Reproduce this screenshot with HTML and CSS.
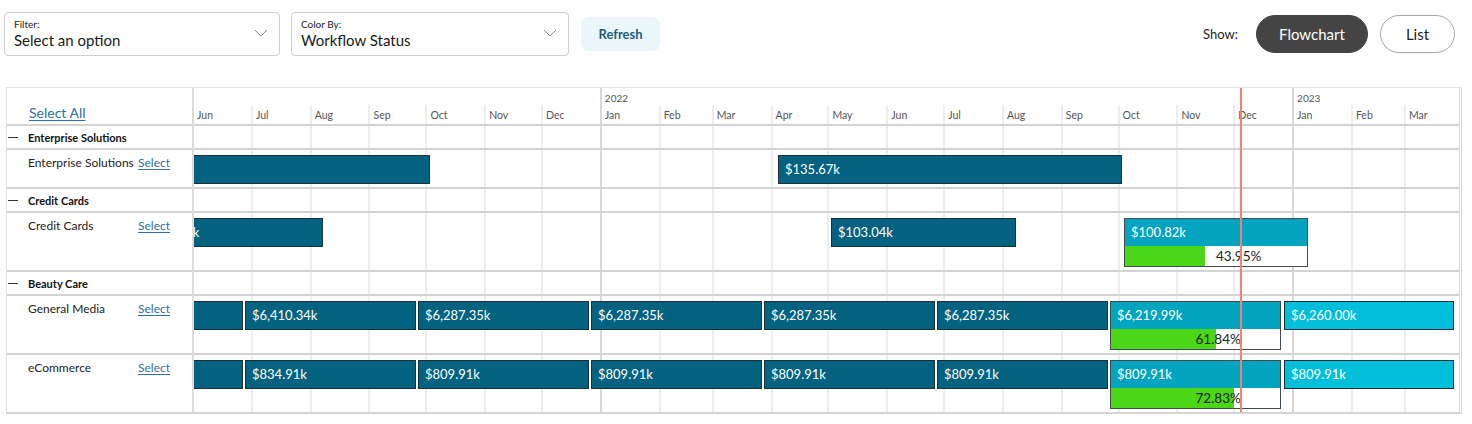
FILE: index.html
```html
<!DOCTYPE html>
<html lang="en">
<head>
<meta charset="utf-8">
<title>Workflow Gantt</title>
<link rel="stylesheet" href="styles.css">
</head>
<body>
<div class="toolbar">
  <div class="select select-filter">
    <div class="select-text">
      <span class="select-label">Filter:</span>
      <span class="select-value">Select an option</span>
    </div>
    <svg class="chev" width="14" height="8" viewBox="0 0 14 8"><path d="M1 1 L7 7 L13 1" fill="none" stroke="#888" stroke-width="1"/></svg>
  </div>
  <div class="select select-color">
    <div class="select-text">
      <span class="select-label">Color By:</span>
      <span class="select-value">Workflow Status</span>
    </div>
    <svg class="chev" width="14" height="8" viewBox="0 0 14 8"><path d="M1 1 L7 7 L13 1" fill="none" stroke="#888" stroke-width="1"/></svg>
  </div>
  <button class="refresh">Refresh</button>
  <div class="spacer"></div>
  <span class="show-label">Show:</span>
  <button class="pill pill-active">Flowchart</button>
  <button class="pill">List</button>
</div>

<div class="gantt">
  <div class="left-col">
    <div class="cell head-cell"><a class="select-all">Select All</a></div>
    <div class="cell group-cell"><span class="dash"></span><b>Enterprise Solutions</b></div>
    <div class="cell item-cell h39"><span class="item-name">Enterprise Solutions</span><a class="sel-link">Select</a></div>
    <div class="cell group-cell"><span class="dash"></span><b>Credit Cards</b></div>
    <div class="cell item-cell h59"><span class="item-name">Credit Cards</span><a class="sel-link">Select</a></div>
    <div class="cell group-cell"><span class="dash"></span><b>Beauty Care</b></div>
    <div class="cell item-cell h59"><span class="item-name">General Media</span><a class="sel-link">Select</a></div>
    <div class="cell item-cell h58 last"><span class="item-name">eCommerce</span><a class="sel-link">Select</a></div>
  </div>

  <div class="timeline">
    <div class="tl-head">
      <div class="years">
        <div class="year"></div>
        <div class="year year-mark">2022</div>
        <div class="year year-mark">2023</div>
      </div>
      <div class="months">
        <div class="month">Jun</div><div class="month">Jul</div><div class="month">Aug</div><div class="month">Sep</div><div class="month">Oct</div><div class="month">Nov</div><div class="month">Dec</div>
        <div class="month ystart">Jan</div><div class="month">Feb</div><div class="month">Mar</div><div class="month">Apr</div><div class="month">May</div><div class="month">Jun</div><div class="month">Jul</div><div class="month">Aug</div><div class="month">Sep</div><div class="month">Oct</div><div class="month">Nov</div><div class="month">Dec</div>
        <div class="month ystart">Jan</div><div class="month">Feb</div><div class="month">Mar</div>
      </div>
    </div>

    <div class="tl-body">
      <div class="gridlines">
        <div></div><div></div><div></div><div></div><div></div><div></div><div></div>
        <div class="ystart"></div><div></div><div></div><div></div><div></div><div></div><div></div><div></div><div></div><div></div><div></div><div></div>
        <div class="ystart"></div><div></div><div></div>
      </div>

      <div class="trow group-cell"></div>
      <div class="trow h39">
        <div class="bar dark" style="left:-300px;width:536px"><span>$412.50k</span></div>
        <div class="bar dark" style="left:584px;width:344px"><span>$135.67k</span></div>
      </div>
      <div class="trow group-cell"></div>
      <div class="trow h59">
        <div class="bar dark" style="left:-49px;width:178px"><span>$58.22k</span></div>
        <div class="bar dark" style="left:637px;width:185px"><span>$103.04k</span></div>
        <div class="bar mid prog" style="left:930px;width:184px"><span>$100.82k</span>
          <div class="progress"><div class="fill" style="width:43.95%"></div><em>43.95%</em></div>
        </div>
      </div>
      <div class="trow group-cell"></div>
      <div class="trow h59">
        <div class="bar dark" style="left:-122px;width:171px"><span>$6,410.34k</span></div>
        <div class="bar dark" style="left:51px;width:171px"><span>$6,410.34k</span></div>
        <div class="bar dark" style="left:224px;width:171px"><span>$6,287.35k</span></div>
        <div class="bar dark" style="left:397px;width:171px"><span>$6,287.35k</span></div>
        <div class="bar dark" style="left:570px;width:171px"><span>$6,287.35k</span></div>
        <div class="bar dark" style="left:743px;width:171px"><span>$6,287.35k</span></div>
        <div class="bar mid prog" style="left:916px;width:171px"><span>$6,219.99k</span>
          <div class="progress"><div class="fill" style="width:61.84%"></div><em>61.84%</em></div>
        </div>
        <div class="bar light" style="left:1090px;width:170px"><span>$6,260.00k</span></div>
      </div>
      <div class="trow h58 last">
        <div class="bar dark" style="left:-122px;width:171px"><span>$834.91k</span></div>
        <div class="bar dark" style="left:51px;width:171px"><span>$834.91k</span></div>
        <div class="bar dark" style="left:224px;width:171px"><span>$809.91k</span></div>
        <div class="bar dark" style="left:397px;width:171px"><span>$809.91k</span></div>
        <div class="bar dark" style="left:570px;width:171px"><span>$809.91k</span></div>
        <div class="bar dark" style="left:743px;width:171px"><span>$809.91k</span></div>
        <div class="bar mid prog" style="left:916px;width:171px"><span>$809.91k</span>
          <div class="progress"><div class="fill" style="width:72.83%"></div><em>72.83%</em></div>
        </div>
        <div class="bar light" style="left:1090px;width:170px"><span>$809.91k</span></div>
      </div>
    </div>
    <div class="today" style="left:1046px"></div>
  </div>
</div>
</body>
</html>
```

FILE: styles.css
```css
* { box-sizing: border-box; }
html, body { margin: 0; padding: 0; background: #fff; }
body {
  font-family: "Lato", "Open Sans", "Liberation Sans", sans-serif;
  color: #222;
  width: 1472px;
  height: 424px;
  overflow: hidden;
}

/* toolbar */
.toolbar {
  display: flex;
  align-items: center;
  padding: 12px 17px 0 4px;
  height: 56px;
}
.select {
  height: 44px;
  border: 1px solid #cfcfcf;
  border-radius: 4px;
  display: flex;
  align-items: center;
  justify-content: space-between;
  padding: 0 11px 0 9px;
}
.select-filter { width: 276px; }
.select-color { width: 278px; margin-left: 11px; }
.select-text { display: flex; flex-direction: column; }
.select-label { font-size: 10px; color: #222; line-height: 12px; margin-top: 0; }
.select-value { font-size: 15px; line-height: 20px; color: #1a1a1a; }
.chev { margin-top: -2px; }
.refresh {
  margin-left: 12px;
  width: 79px;
  height: 34px;
  border: none;
  border-radius: 8px;
  background: #eaf6f9;
  color: #1e5d78;
  font-family: inherit;
  font-weight: 700;
  font-size: 13px;
  margin-top: -1px;
}
.spacer { flex: 1; }
.show-label { font-size: 13px; color: #222; margin-right: 18px; }
.pill {
  height: 38px;
  border-radius: 19px;
  border: 1px solid #a6a6a6;
  background: #fff;
  font-family: inherit;
  font-size: 15px;
  color: #222;
  width: 75px;
  margin-left: 12px;
}
.pill-active {
  width: 112px;
  background: #444;
  border-color: #444;
  color: #fff;
  margin-left: 0;
}

/* gantt */
.gantt {
  margin: 31px 0 0 6px;
  width: 1456px;
  display: flex;
  border: 1px solid #e2e2e2;
  border-right: 3px double #d8d8d8;
  border-bottom: 2px solid #d4d4d4;
}
.left-col {
  width: 187px;
  flex: none;
  border-right: 2px solid #dcdcdc;
}
.cell, .trow { border-bottom: 2px solid #d4d4d4; }
.cell.last, .trow.last { border-bottom: none; }
.head-cell {
  height: 38px;
  padding: 14px 0 0 22px;
}
.select-all {
  font-size: 14px;
  color: #2d6fa7;
  text-decoration: underline;
  text-underline-offset: 2px;
}
.group-cell {
  height: 24px;
  display: flex;
  align-items: center;
  font-size: 11px;
}
.left-col .group-cell b { color: #111; }
.dash {
  width: 10px;
  height: 1px;
  background: #333;
  margin: 0 10px 0 1px;
}
.h39 { height: 39px; }
.h59 { height: 59px; }
.h58 { height: 57px; }
.item-cell {
  display: flex;
  align-items: flex-start;
  padding: 6px 0 0 21px;
  font-size: 12px;
  line-height: 14px;
}
.item-name { width: 110px; color: #222; white-space: nowrap; }
.sel-link {
  color: #2d6fa7;
  text-decoration: underline;
  text-underline-offset: 2px;
}

.timeline {
  flex: 1;
  position: relative;
  overflow: hidden;
}
.tl-head {
  height: 38px;
  border-bottom: 2px solid #d4d4d4;
  display: flex;
  flex-direction: column;
}
.years {
  height: 17px;
  display: grid;
  grid-template-columns: 214fr 365fr 88fr;
}
.year {
  font-size: 10px;
  color: #555;
  padding: 4px 0 0 3px;
}
.year-mark { border-left: 2px solid #d8d8d8; }
.months {
  flex: 1;
  display: grid;
  grid-template-columns: 30fr 31fr 31fr 30fr 31fr 30fr 31fr 31fr 28fr 31fr 30fr 31fr 30fr 31fr 31fr 30fr 31fr 30fr 31fr 31fr 28fr 29fr;
}
.month {
  border-left: 2px solid #eeeeee;
  font-size: 10.5px;
  color: #555;
  padding: 4px 0 0 3px;
}
.month:first-child { border-left: none; }
.month.ystart { border-left-color: #d8d8d8; }

.tl-body { position: relative; }
.gridlines {
  position: absolute;
  inset: 0;
  display: grid;
  grid-template-columns: 30fr 31fr 31fr 30fr 31fr 30fr 31fr 31fr 28fr 31fr 30fr 31fr 30fr 31fr 31fr 30fr 31fr 30fr 31fr 31fr 28fr 29fr;
  pointer-events: none;
}
.gridlines div { border-left: 2px solid #eeeeee; }
.gridlines div:first-child { border-left: none; }
.gridlines div.ystart { border-left-color: #d8d8d8; }

.trow { position: relative; }
.bar {
  position: absolute;
  top: 5px;
  height: 29px;
  border: 1px solid #1d2f38;
  color: #fff;
  font-size: 13px;
  line-height: 27px;
  white-space: nowrap;
  overflow: hidden;
}
.bar span { padding-left: 6px; display: block; }
.dark { background: #03627f; }
.mid { background: #02a4bf; }
.light { background: #01bfdb; }
.bar.prog {
  height: 49px;
  border-color: #3f4b50;
}
.bar.prog span { height: 27px; }
.progress {
  position: relative;
  height: 20px;
  background: #fff;
}
.progress .fill {
  position: absolute;
  left: 0; top: 0; bottom: 0;
  background: #4cd618;
}
.progress em {
  position: relative;
  display: block;
  padding-left: 50%;
  font-style: normal;
  font-size: 13.5px;
  line-height: 20px;
  color: #222;
}

.today {
  position: absolute;
  top: 0;
  bottom: 0;
  width: 2px;
  background: #f4826f;
}
```
